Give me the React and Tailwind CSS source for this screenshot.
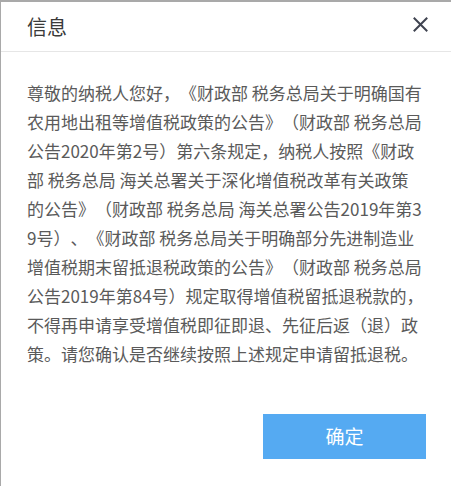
import React from 'react';

// line breaks follow the original dialog
const lines = [
    '尊敬的纳税人您好，《财政部 税务总局关于明确国有',
    '农用地出租等增值税政策的公告》（财政部 税务总局',
    '公告2020年第2号）第六条规定，纳税人按照《财政',
    '部 税务总局 海关总署关于深化增值税改革有关政策',
    '的公告》（财政部 税务总局 海关总署公告2019年第3',
    '9号）、《财政部 税务总局关于明确部分先进制造业',
    '增值税期末留抵退税政策的公告》（财政部 税务总局',
    '公告2019年第84号）规定取得增值税留抵退税款的，',
    '不得再申请享受增值税即征即退、先征后返（退）政',
    '策。请您确认是否继续按照上述规定申请留抵退税。',
];

export default function App() {
    return (
        <div
            className="w-[451px] h-[486px] bg-white border-t-2 border-l border-[#a9a9a9] flex flex-col overflow-hidden"
            style={{ fontFamily: '"Microsoft YaHei", "Noto Sans CJK SC", "Noto Sans", sans-serif' }}
        >
            {/* Header */}
            <div className="h-[50px] shrink-0 border-b border-[#e6e6e6] flex justify-between pl-[26px] pr-[23px]">
                <h2 className="mt-[15px] text-[20px] leading-[20px] text-[#3a3a3a] font-normal">信息</h2>
                <button className="mt-[14px] w-[16px] h-[16px] flex items-center justify-center text-[#3f4350]">
                    <svg width="15" height="15" viewBox="0 0 15 15" fill="none" stroke="currentColor" strokeWidth="2" strokeLinecap="square">
                        <path d="M1.5 1.5 L13.5 13.5 M13.5 1.5 L1.5 13.5" />
                    </svg>
                </button>
            </div>

            {/* Body */}
            <div className="pt-[26px] pl-[26px] text-[17px] leading-[29px] text-[#5a5a5a] [text-spacing-trim:space-all]">
                {lines.map((line) => (
                    <p key={line} className="whitespace-nowrap">{line}</p>
                ))}
            </div>

            {/* Footer */}
            <div className="flex justify-end pr-[25px] mt-[46px]">
                <button className="w-[163px] h-[45px] bg-[#55aaf2] text-white text-[19px]">确定</button>
            </div>
        </div>
    );
}
